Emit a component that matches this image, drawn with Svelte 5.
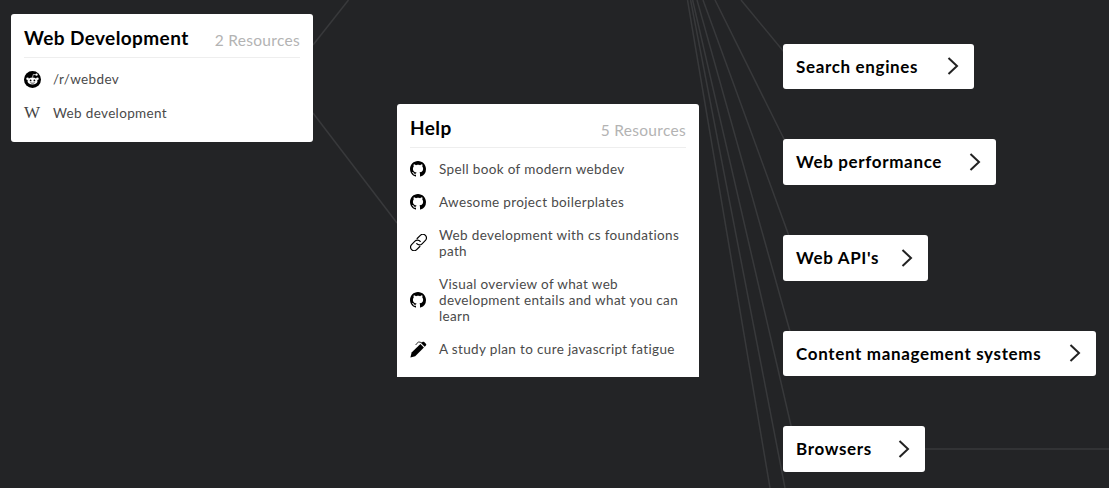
<script>
	const links = [
		[348.5, 0, 313, 45],
		[313, 113, 397, 223],
		[741, 0, 784, 52],
		[715, 0, 785, 141],
		[703, 0, 789, 236],
		[697, 0, 791, 335],
		[692.6, 0, 792, 430],
		[690.6, 0, 785, 488],
		[687.5, 0, 770, 488],
		[925, 449, 1109, 449]
	];

	const github = 'M8 0C3.58 0 0 3.58 0 8c0 3.54 2.29 6.53 5.47 7.59.4.07.55-.17.55-.38 0-.19-.01-.82-.01-1.49-2.01.37-2.53-.49-2.69-.94-.09-.23-.48-.94-.82-1.13-.28-.15-.68-.52-.01-.53.63-.01 1.08.58 1.23.82.72 1.21 1.87.87 2.33.66.07-.52.28-.87.51-1.07-1.78-.2-3.64-.89-3.64-3.95 0-.87.31-1.59.82-2.15-.08-.2-.36-1.02.08-2.12 0 0 .67-.21 2.2.82.64-.18 1.32-.27 2-.27s1.36.09 2 .27c1.53-1.04 2.2-.82 2.2-.82.44 1.1.16 1.92.08 2.12.51.56.82 1.27.82 2.15 0 3.07-1.87 3.75-3.65 3.95.29.25.54.73.54 1.48 0 1.07-.01 1.93-.01 2.2 0 .21.15.46.55.38A8.01 8.01 0 0 0 16 8c0-4.42-3.58-8-8-8z';

	const webdev = [
		{ icon: 'reddit', label: '/r/webdev' },
		{ icon: 'wiki', label: 'Web development' }
	];

	const help = [
		{ icon: 'github', label: 'Spell book of modern webdev' },
		{ icon: 'github', label: 'Awesome project boilerplates' },
		{ icon: 'link', label: 'Web development with cs foundations path' },
		{ icon: 'github', label: 'Visual overview of what web development entails and what you can learn' },
		{ icon: 'pen', label: 'A study plan to cure javascript fatigue' }
	];

	const topics = [
		{ label: 'Search engines', x: 783, y: 44, w: 191, h: 45 },
		{ label: 'Web performance', x: 783, y: 139, w: 213, h: 46 },
		{ label: "Web API's", x: 783, y: 235, w: 145, h: 46 },
		{ label: 'Content management systems', x: 783, y: 331, w: 313, h: 45 },
		{ label: 'Browsers', x: 783, y: 426, w: 142, h: 46 }
	];
</script>

{#snippet icon(name)}
	<span class="icon">
		{#if name === 'github'}
			<svg width="16" height="16" viewBox="0 0 16 16"><path d={github} /></svg>
		{:else if name === 'reddit'}
			<svg width="17" height="17" viewBox="0 0 17 17">
				<circle cx="8.5" cy="8.5" r="8.5" />
				<ellipse cx="8.5" cy="10" rx="5" ry="3.6" fill="#fff" />
				<circle cx="3.6" cy="7.8" r="1.3" fill="#fff" />
				<circle cx="13.4" cy="7.8" r="1.3" fill="#fff" />
				<circle cx="12.6" cy="3.7" r="1.1" fill="#fff" />
				<path d="M8.5 6.500 9.300 3.400l3 .4" fill="none" stroke="#fff" stroke-width=".7" />
				<circle cx="6.600" cy="9.400" r=".9" />
				<circle cx="10.400" cy="9.400" r=".9" />
				<path d="M6.400 11.600c1.200.8 3 .8 4.200 0" fill="none" stroke="#000" stroke-width=".7" />
			</svg>
		{:else if name === 'wiki'}
			<span class="wiki">W</span>
		{:else if name === 'link'}
			<svg width="17" height="17" viewBox="1.500 1.500 14 14" fill="none" stroke="#000" stroke-width="1" stroke-linecap="round">
				<path d="M7.400 5.200 10 2.600a2.900 2.900 0 0 1 4.200 4.200l-2.800 2.800a2.900 2.900 0 0 1-4.300-.2" />
				<path d="M9.600 11.800 7 14.400a2.900 2.900 0 0 1-4.200-4.200l2.800-2.800a2.900 2.900 0 0 1 4.300.2" />
			</svg>
		{:else}
			<svg width="17" height="17" viewBox="0 0 17 17">
				<path d="M1.600 11.600 10.400 3l3.500 3.500-8.700 8.800L.4 16.600z" />
				<path d="M11.200 2.200 12.400 1c.6-.5 1.300-.5 1.800 0l1.700 1.700c.5.5.5 1.200 0 1.800l-1.200 1.200z" />
				<path d="M11.800 1.600 8.400.9 5.600 4" fill="none" stroke="#000" stroke-width=".8" />
			</svg>
		{/if}
	</span>
{/snippet}

{#snippet card(title, count, items, cls)}
	<section class="card {cls}">
		<header>
			<h2>{title}</h2>
			<span class="count">{count} Resources</span>
		</header>
		<ul>
			{#each items as item}
				<li>
					{@render icon(item.icon)}
					<span>{item.label}</span>
				</li>
			{/each}
		</ul>
	</section>
{/snippet}

<div class="map">
	<svg class="links" width="1109" height="488">
		{#each links as [x1, y1, x2, y2]}
			<line {x1} {y1} {x2} {y2} />
		{/each}
	</svg>

	{@render card('Web Development', 2, webdev, 'webdev')}
	{@render card('Help', 5, help, 'help')}

	{#each topics as t}
		<button class="topic" style="left: {t.x}px; top: {t.y}px; width: {t.w}px; height: {t.h}px">
			<span>{t.label}</span>
			<svg width="14" height="20" viewBox="0 0 14 20" fill="none" stroke="#222" stroke-width="2">
				<path d="M2.500 2 11 10l-8.500 8" />
			</svg>
		</button>
	{/each}
</div>

<style>
	:global(body) {
		background: #232426;
	}

	.map {
		position: relative;
		width: 1109px;
		height: 488px;
		overflow: hidden;
		background: #232426;
		font-family: Lato, 'Open Sans', sans-serif;
	}

	.links {
		position: absolute;
		inset: 0;
	}

	.links line {
		stroke: #38393b;
		stroke-width: 1.5;
	}

	.card {
		position: absolute;
		box-sizing: border-box;
		background: #fff;
		padding: 0 13px;
	}

	.webdev {
		left: 11px;
		top: 14px;
		width: 302px;
		height: 128px;
		border-radius: 3px;
	}

	.help {
		left: 397px;
		top: 104px;
		width: 302px;
		height: 273px;
		border-radius: 3px 3px 0 0;
	}

	header {
		display: flex;
		justify-content: space-between;
		align-items: flex-end;
		height: 44px;
		padding-bottom: 6px;
		box-sizing: border-box;
		border-bottom: 1px solid #eee;
	}

	h2 {
		margin: 0;
		font-size: 19px;
		font-weight: 700;
		line-height: 26px;
		color: #000;
		letter-spacing: 0.4px;
	}

	.count {
		margin-bottom: 1px;
		font-size: 15.5px;
		line-height: 20px;
		color: #b3b3b3;
		letter-spacing: 0.3px;
	}

	ul {
		list-style: none;
		margin: 0;
		padding: 4px 0 0;
	}

	li {
		display: flex;
		align-items: center;
		gap: 12px;
		padding: 8.5px 0;
		font-size: 13.5px;
		line-height: 16px;
		color: #4a4a4a;
		letter-spacing: 0.35px;
	}

	.icon {
		flex: none;
		display: flex;
		width: 17px;
	}

	.wiki {
		font-family: 'Liberation Serif', serif;
		font-size: 17px;
		line-height: 16px;
		color: #444;
	}

	.topic {
		position: absolute;
		box-sizing: border-box;
		display: flex;
		justify-content: space-between;
		align-items: center;
		padding: 0 14px 1px 13px;
		border: 0;
		border-radius: 3px;
		background: #fff;
		color: #000;
		font: 700 17px Lato, 'Open Sans', sans-serif;
		letter-spacing: 0.65px;
	}
</style>
